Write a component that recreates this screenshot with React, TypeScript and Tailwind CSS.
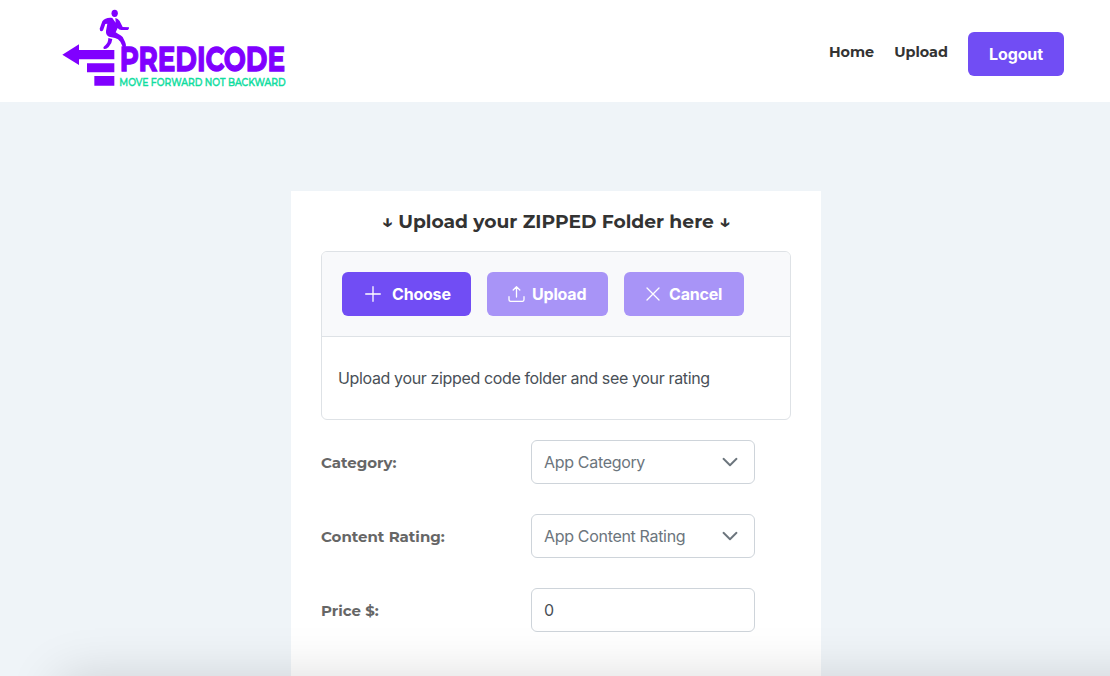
import React from 'react';

const heading = "font-['Montserrat','Inter',sans-serif]";

function Logo() {
  return (
    <svg className="h-[85px] w-[240px] overflow-visible" viewBox="0 0 720 255" role="img" aria-label="Predicode">
      <g fill="#8000ff">
        <path d="M22 149 72 118V135H178V163H72V180Z" />
        <path d="M96 175H178V202H96ZM118 213H178V242H118Z" />
        <ellipse cx="179" cy="25" rx="9.5" ry="11" />
        <path d="M168 38Q150 37 142 49L134 71Q134 79 140 79Q145 77 146 71L151 57L157 56L153 78Q152 91 162 95L180 99Q190 101 196 110L202 123Q207 130 213 124Q214 119 210 110L203 96Q199 91 190 87L182 82L188 69Q192 75 199 75L218 75Q223 73 222 67L203 66L194 48Q189 40 181 39L182 53L172 39Z" />
        <path d="M160 99Q160 113 151 121Q143 127 146 131Q152 135 161 126Q171 116 172 102Z" />
        <text x="194" y="197" fontSize="102" fontWeight="700" fontFamily="Montserrat, sans-serif" textLength="496" lengthAdjust="spacingAndGlyphs" stroke="#8000ff" strokeWidth="4">PREDICODE</text>
      </g>
      <text x="193" y="243" fontSize="32" fontWeight="500" fill="#10dda0" stroke="#10dda0" strokeWidth="1.3" fontFamily="Montserrat, sans-serif" textLength="499" lengthAdjust="spacingAndGlyphs">MOVE FORWARD NOT BACKWARD</text>
    </svg>
  );
}

function Icon({ d, className = 'size-4', width = 1.3 }: { d: string; className?: string; width?: number }) {
  return (
    <svg className={className} viewBox="0 0 16 16" fill="none" stroke="currentColor" strokeWidth={width} strokeLinecap="round" strokeLinejoin="round">
      <path d={d} />
    </svg>
  );
}

function Field({ label, children }: { label: string; children: React.ReactNode }) {
  return (
    <div className="flex h-11 items-center">
      <label className={`${heading} w-[210px] pt-0.5 text-[15px] font-bold text-[#666]`}>{label}</label>
      <div className="flex h-11 w-56 items-center justify-between rounded-md border border-[#ced4da] bg-white px-3 text-base tracking-[-0.32px]">{children}</div>
    </div>
  );
}

const chevron = 'M1.5 4.8 8 11.2 14.5 4.8';

export default function App() {
  return (
    <div className="relative flex h-[676px] flex-col overflow-hidden bg-[#eff4f8] font-['Inter',sans-serif] text-[#495057]">
      <header className="flex h-[102px] shrink-0 items-start justify-between bg-white pr-[46px] pl-[55px]">
        <div className="pt-[5px]"><Logo /></div>
        <nav className={`flex items-start pt-8 text-[14.4px] font-bold text-[#333] ${heading}`}>
          <a className="mr-5 pt-2 leading-6">Home</a>
          <a className="mr-5 pt-2 leading-6">Upload</a>
          <button className="h-11 w-24 rounded-md bg-[#714df4] font-['Inter',sans-serif] text-base font-bold tracking-[-0.1px] text-white">Logout</button>
        </nav>
      </header>

      <main className="mt-[89px] ml-[291px] h-[520px] w-[530px] shrink-0 bg-white px-[30px] pt-[19px]">
        <h1 className={`h-6 text-center text-[18.72px] leading-6 font-bold whitespace-nowrap text-[#333] ${heading}`}>↓ Upload your ZIPPED Folder here ↓</h1>
        <section className="mt-[17px] h-[169px] overflow-hidden rounded-md border border-[#dee2e6]">
          <div className="flex h-[85px] items-center gap-4 border-b border-[#dee2e6] bg-[#f8f9fb] px-5 font-bold tracking-[-0.2px] text-white">
            <button className="flex h-11 w-[129px] items-center rounded-md bg-[#714df4] pl-[23px]">
              <Icon d="M8 .7V15.3M.7 8H15.3" /><span className="ml-[11px]">Choose</span>
            </button>
            <button className="flex h-11 w-[121px] items-center rounded-md bg-[#a894f7] pl-[21px]">
              <Icon className="h-4 w-[17px]" d="M8 11V.7M4.7 4 8 .7 11.3 4M.5 10.7V13.5Q.5 15.4 2.4 15.4H13.6Q15.5 15.4 15.5 13.5V10.7" /><span className="ml-[7px]">Upload</span>
            </button>
            <button className="flex h-11 w-[120px] items-center rounded-md bg-[#a894f7] pl-[21px]">
              <Icon d="M2 2 14 14M14 2 2 14" /><span className="ml-2">Cancel</span>
            </button>
          </div>
          <p className="flex h-[82px] items-center pl-4 tracking-[-0.36px] whitespace-nowrap">Upload your zipped code folder and see your rating</p>
        </section>
        <form className="mt-5 flex flex-col gap-[30px]">
          <Field label="Category:"><span className="text-[#6c757d]">App Category</span><Icon className="mr-1 size-4 text-[#6c757d]" d={chevron} width={1.9} /></Field>
          <Field label="Content Rating:"><span className="text-[#6c757d]">App Content Rating</span><Icon className="mr-1 size-4 text-[#6c757d]" d={chevron} width={1.9} /></Field>
          <Field label="Price $:"><span>0</span></Field>
        </form>
      </main>
      <div className="pointer-events-none absolute top-[679px] left-[60px] h-[300px] w-[1200px] shadow-[0_0_50px_rgba(0,0,0,0.16)]" />
    </div>
  );
}
